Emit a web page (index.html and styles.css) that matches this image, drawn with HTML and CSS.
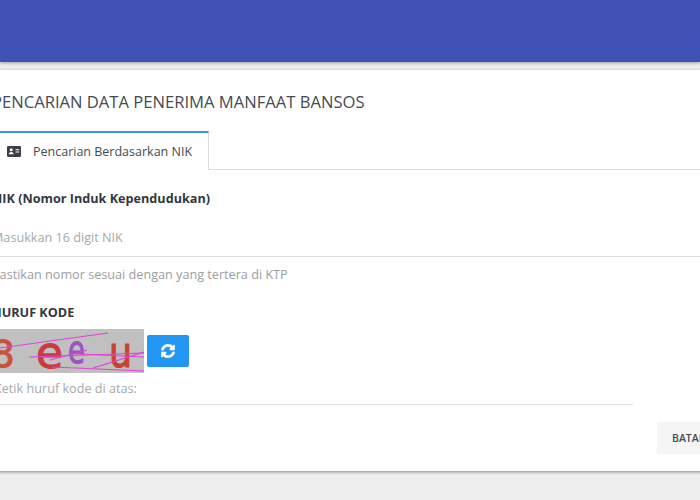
FILE: index.html
```html
<!DOCTYPE html>
<html lang="id">
<head>
<meta charset="utf-8">
<title>Pencarian Data Penerima Manfaat Bansos</title>
<link rel="stylesheet" href="styles.css">
</head>
<body>
<header class="topbar"></header>
<main class="card">
  <h1 class="title">PENCARIAN DATA PENERIMA MANFAAT BANSOS</h1>
  <div class="tabs">
    <div class="tab">
      <svg class="tab-icon" viewBox="0 0 14 11" aria-hidden="true">
        <path fill="#3b3f44" fill-rule="evenodd" d="M1.2 0h11.6C13.5 0 14 .5 14 1.2v8.6c0 .7-.5 1.2-1.2 1.2H1.2C.5 11 0 10.500 0 9.800V1.200C0 .5.500 0 1.200 0zM4.200 2.300a1.500 1.500 0 1 0 0 3 1.500 1.500 0 0 0 0-3zM1.700 8.300h5c0-1.300-1-2.300-2.500-2.300s-2.500 1-2.500 2.300zM8.500 3.200v1h3.800v-1zM8.500 5.500v1h3.800v-1z"/>
      </svg>
      <span>Pencarian Berdasarkan NIK</span>
    </div>
  </div>
  <section class="form">
    <label class="label nik-label">NIK (Nomor Induk Kependudukan)</label>
    <div class="field nik-field"><span class="placeholder">Masukkan 16 digit NIK</span></div>
    <p class="hint">Pastikan nomor sesuai dengan yang tertera di KTP</p>
    <label class="label code-label">HURUF KODE</label>
    <div class="captcha-row">
      <svg class="captcha" viewBox="0 0 152 44" role="img" aria-label="captcha">
        <rect width="152" height="44" fill="#c0c0c0"/>
        <text x="-1" y="38" class="c1">8</text>
        <text x="44" y="39" class="c2">e</text>
        <text transform="translate(76 34) scale(.72 1)" class="c3">e</text>
        <text transform="translate(117 38) scale(.85 1)" class="c4">u</text>
        <g class="noise">
          <path d="M8 19 116 4"/>
          <path d="M37 28 152 24"/>
          <path d="M60 38 152 42"/>
          <path d="M101 39 152 23"/>
          <path d="M58 31 95 21"/>
          <path d="M88 25 152 28"/>
        </g>
      </svg>
      <button class="refresh" type="button" aria-label="Muat ulang">
        <svg viewBox="0 0 512 512" aria-hidden="true"><path fill="#fff" stroke="#fff" stroke-width="24" d="M370.720 133.280C339.458 104.008 298.888 87.962 255.848 88c-77.458.068-144.328 53.178-162.791 126.850-1.344 5.363-6.122 9.150-11.651 9.150H24.103c-7.498 0-13.194-6.807-11.807-14.176C33.933 94.924 134.813 8 256 8c66.448 0 126.791 26.136 171.315 68.685L463.030 40.970C478.149 25.851 504 36.559 504 57.941V192c0 13.255-10.745 24-24 24H345.941c-21.382 0-32.090-25.851-16.971-40.971l41.750-41.749zM32 296h134.059c21.382 0 32.090 25.851 16.971 40.971l-41.750 41.750c31.262 29.273 71.835 45.319 114.876 45.280 77.418-.070 144.315-53.144 162.787-126.849 1.344-5.363 6.122-9.150 11.651-9.150h57.304c7.498 0 13.194 6.807 11.807 14.176C478.067 417.076 377.187 504 256 504c-66.448 0-126.791-26.136-171.315-68.685L48.970 471.030C33.851 486.149 8 475.441 8 454.059V320c0-13.255 10.745-24 24-24z"/></svg>
      </button>
    </div>
    <div class="field code-field"><span class="placeholder">Ketik huruf kode di atas:</span></div>
    <div class="actions"><button class="batal" type="button">BATAL</button></div>
  </section>
</main>
</body>
</html>
```
FILE: styles.css
```css
html, body {
  margin: 0;
  height: 100%;
  overflow: hidden;
}
body {
  background: #eeeeee;
  font-family: "Open Sans", "Noto Sans", sans-serif;
  color: #3c4248;
  width: 700px;
  height: 500px;
}
.topbar {
  height: 62px;
  background: #3f51b5;
  box-shadow: 0 1px 3px rgba(0, 0, 0, .35);
}
.card {
  margin: 8px -40px 0 -8px;
  height: 401px;
  background: #fff;
  box-shadow: 0 1px 3px rgba(0, 0, 0, .45);
  box-sizing: border-box;
  padding-top: 21px;
}
.title {
  margin: 0 0 18px;
  font-size: 16.6px;
  line-height: 22px;
  font-weight: 400;
  color: #454b52;
}
.tabs {
  height: 39px;
  box-sizing: border-box;
  border-bottom: 1px solid #dddddd;
}
.tab {
  width: 217px;
  height: 39px;
  box-sizing: border-box;
  border-top: 2px solid #2f96f3;
  border-right: 1px solid #dddddd;
  background: #fff;
  display: flex;
  align-items: center;
  padding-left: 15px;
  font-size: 12.5px;
  color: #454b52;
  gap: 12px;
}
.tab-icon {
  width: 14px;
  height: 11px;
  flex: none;
}
.form {
  padding: 19px 0 0 0;
}
.label {
  display: block;
  font-size: 12.65px;
  line-height: 18px;
  font-weight: 700;
  color: #33383d;
}
.nik-label {
  margin-bottom: 0;
}
.field {
  box-sizing: border-box;
  border-bottom: 1px solid #dddddd;
}
.nik-field {
  height: 40px;
  margin-top: 10px;
  padding-top: 11px;
}
.placeholder {
  display: block;
  font-size: 12.65px;
  line-height: 18px;
  color: #a5a9ad;
}
.hint {
  margin: 8px 0 0;
  font-size: 12.65px;
  line-height: 18px;
  color: #9a9ea3;
}
.code-label {
  margin-top: 20px;
}
.captcha-row {
  display: flex;
  align-items: center;
  gap: 3px;
  margin: 8px 0 0 0;
}
.captcha {
  width: 152px;
  height: 44px;
  display: block;
  flex: none;
}
.c1, .c2, .c3, .c4 {
  font-family: "DejaVu Sans", sans-serif;
  stroke-width: 1.1;
}
.c1 { font-size: 37px; fill: #c9523f; stroke: #c9523f; }
.c2 { font-size: 44px; fill: #cc3b3b; stroke: #cc3b3b; }
.c3 { font-size: 38px; fill: #9a55bf; stroke: #9a55bf; }
.c4 { font-size: 43px; fill: #c9412f; stroke: #c9412f; }
.noise {
  stroke: #e040d8;
  stroke-width: 1.2;
  fill: none;
}
.refresh {
  width: 42px;
  height: 32px;
  border: 0;
  border-radius: 2px;
  background: #2196f3;
  padding: 0;
  display: flex;
  align-items: center;
  justify-content: center;
}
.refresh svg {
  width: 14px;
  height: 14px;
}
.code-field {
  width: 641px;
  height: 32px;
  padding: 6px 0 0 2px;
}
.actions {
  margin: 17px 0 0 665px;
}
.batal {
  width: 80px;
  height: 32px;
  border: 0;
  border-radius: 2px;
  background: #f5f5f5;
  font-family: inherit;
  font-size: 10.5px;
  font-weight: 600;
  color: #454b52;
  text-align: left;
  padding: 0 0 0 15px;
}
```
